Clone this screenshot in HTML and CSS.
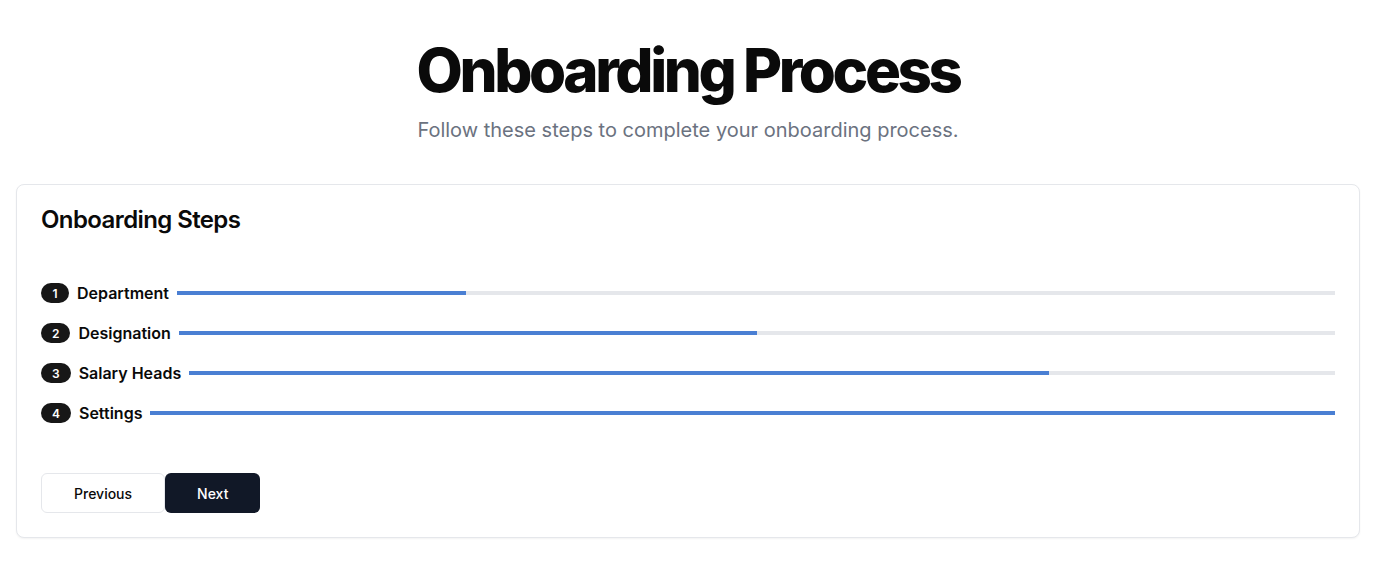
FILE: index.html
```html
<!DOCTYPE html>
<html lang="en">
<head>
<meta charset="utf-8">
<title>Onboarding Process</title>
<link rel="stylesheet" href="styles.css">
</head>
<body>
<main class="page">
  <header class="hero">
    <h1 class="hero-title">Onboarding Process</h1>
    <p class="hero-sub">Follow these steps to complete your onboarding process.</p>
  </header>
  <section class="card">
    <h2 class="card-title">Onboarding Steps</h2>
    <ol class="steps">
      <li class="step">
        <span class="badge">1</span>
        <span class="step-label">Department</span>
        <div class="track"><div class="fill" style="width:25%"></div></div>
      </li>
      <li class="step">
        <span class="badge">2</span>
        <span class="step-label">Designation</span>
        <div class="track"><div class="fill" style="width:50%"></div></div>
      </li>
      <li class="step">
        <span class="badge">3</span>
        <span class="step-label">Salary Heads</span>
        <div class="track"><div class="fill" style="width:75%"></div></div>
      </li>
      <li class="step">
        <span class="badge">4</span>
        <span class="step-label">Settings</span>
        <div class="track"><div class="fill" style="width:100%"></div></div>
      </li>
    </ol>
    <div class="actions">
      <button class="btn btn-outline" type="button">Previous</button>
      <button class="btn btn-dark" type="button">Next</button>
    </div>
  </section>
</main>
</body>
</html>
```
FILE: styles.css
```css
* { box-sizing: border-box; }
html, body { margin: 0; padding: 0; background: #ffffff; }
body {
  font-family: Inter, "Noto Sans", "Liberation Sans", sans-serif;
  color: #0a0a0a;
}
.page {
  padding: 40px 16px 40px;
}
.hero {
  text-align: center;
  margin-bottom: 40px;
}
.hero-title {
  margin: 0 0 16px;
  font-size: 60px;
  line-height: 60px;
  font-weight: 800;
  letter-spacing: -0.057em;
  color: #0a0a0a;
}
.hero-sub {
  margin: 0;
  font-size: 20px;
  line-height: 28px;
  color: #6b7280;
}
.card {
  border: 1px solid #e5e7eb;
  border-radius: 8px;
  box-shadow: 0 1px 2px rgba(0,0,0,0.05);
  padding: 23px 24px 24px;
  background: #fff;
}
.card-title {
  margin: 0;
  font-size: 24px;
  line-height: 24px;
  font-weight: 600;
  letter-spacing: -0.025em;
}
.steps {
  list-style: none;
  margin: 49px 0 0;
  padding: 0;
  display: flex;
  flex-direction: column;
  gap: 16px;
}
.step {
  display: flex;
  align-items: center;
  gap: 8px;
  height: 24px;
}
.badge {
  display: inline-flex;
  align-items: center;
  justify-content: center;
  min-width: 28px;
  height: 20px;
  padding: 0 10px;
  border: 1px solid transparent;
  border-radius: 10px;
  background: #171717;
  color: #fff;
  font-size: 12px;
  font-weight: 600;
}
.step-label {
  font-size: 16px;
  font-weight: 600;
  white-space: nowrap;
}
.track {
  flex: 1;
  height: 4px;
  background: #e5e7eb;
}
.fill {
  height: 100%;
  background: #4a7fd3;
}
.actions {
  display: flex;
  margin-top: 48px;
}
.btn {
  height: 40px;
  padding: 0 32px;
  font-family: inherit;
  font-size: 14px;
  font-weight: 500;
  border-radius: 6px;
  cursor: pointer;
}
.btn-outline {
  background: #fff;
  color: #0a0a0a;
  border: 1px solid #e5e7eb;
}
.btn-dark {
  background: #111827;
  color: #fff;
  border: 0;
}
```
